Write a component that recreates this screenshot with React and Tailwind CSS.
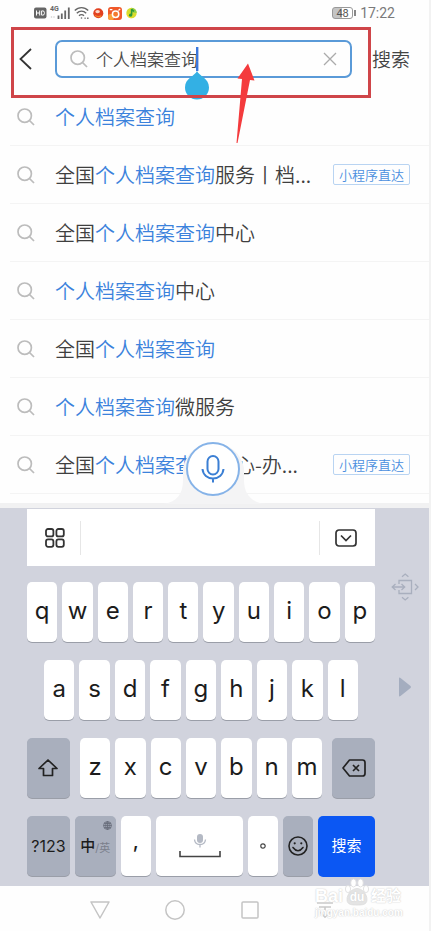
import React, { useState } from "react";

const KEYWORD = "个人档案查询";

const suggestions = [
  { before: "", after: "" },
  { before: "全国", after: "服务丨档...", tag: true },
  { before: "全国", after: "中心" },
  { before: "", after: "中心" },
  { before: "全国", after: "" },
  { before: "", after: "微服务" },
  { before: "全国", after: "中心-办...", tag: true },
];

const keyBase =
  "h-[60px] basis-0 rounded-[5px] flex items-center justify-center text-[#1c1c1c] shadow-[0_1px_0_#9a9ea8]";
const whiteKey = `${keyBase} bg-white`;
const grayKey = `${keyBase} bg-[#a9afbd]`;

const SearchIcon = ({ className }) => (
  <svg className={className} viewBox="0 0 18 18" fill="none" stroke="#bcbcbc" strokeWidth="1.7">
    <circle cx="7.7" cy="7.7" r="6.7" />
    <path d="M12.5 12.5L17 17" />
  </svg>
);

const StatusBar = () => (
  <div className="h-[26px] flex items-center justify-between pl-[34px] pr-[34px]">
    <div className="flex items-center">
      <svg width="13" height="12" viewBox="0 0 13 12">
        <rect x="0" y="0.5" width="12.5" height="11" rx="2" fill="#666" />
        <path
          d="M2.5 3.5v5M5.7 3.5v5M2.5 6h3.2M7.6 3.9v4.2h1.2a1.6 1.6 0 0 0 1.6-1.6v-1a1.6 1.6 0 0 0-1.6-1.6z"
          fill="none"
          stroke="#fff"
          strokeWidth="1"
        />
      </svg>
      <div className="relative ml-[3px] w-[21px] h-[14px]">
        <span className="absolute left-0 top-0 text-[7px] leading-[7px] font-bold text-[#666] font-['Roboto',sans-serif]">
          4G
        </span>
        <svg className="absolute inset-0" width="21" height="14" viewBox="0 0 21 14">
          <path d="M1.5 10v2M4 10v2" stroke="#ddd" strokeWidth="1.3" />
          <path d="M8.5 9.5V13M11.8 7.5V13M15.2 4.5V13M18.8 1.5V13" stroke="#666" strokeWidth="1.8" />
        </svg>
      </div>
      <svg className="ml-[3px]" width="16" height="14" viewBox="0 0 16 14" fill="none" stroke="#666" strokeWidth="1.4">
        <path d="M0.8 4.6C4.6 0.6 10.4 0.6 14.2 4.6" />
        <path d="M2.8 7.3C5.6 4.4 9.4 4.4 12.2 7.3" />
        <path d="M5 9.8C6.6 8.2 8.4 8.2 10 9.8" />
        <circle cx="7.5" cy="12" r="0.8" fill="#666" stroke="none" />
        <path d="M10.5 12.3h1.2M13 12.3h1.6" stroke="#777" strokeWidth="1.6" />
      </svg>
      <svg className="ml-[3px]" width="11" height="12" viewBox="0 0 11 12">
        <circle cx="5.3" cy="6.2" r="5" fill="#e2401f" />
        <ellipse cx="4.6" cy="4.6" rx="2.3" ry="1.6" fill="#fbd9c9" />
        <path d="M2 8.6Q5.3 10.6 8.4 8.8" stroke="#f08a2a" strokeWidth="1.2" fill="none" />
      </svg>
      <svg className="ml-[4px]" width="14" height="13" viewBox="0 0 14 13">
        <rect x="0" y="0" width="14" height="13" rx="3" fill="#f0592a" />
        <rect x="0" y="7" width="6" height="6" rx="2" fill="#f9a03a" />
        <circle cx="7.6" cy="7.2" r="3.2" fill="#f47a2e" stroke="#fff" strokeWidth="1.5" />
        <path d="M1.8 2.6h2.6M10.4 3.4l1.8-1.4" stroke="#fff" strokeWidth="1.3" />
      </svg>
      <svg className="ml-[4px]" width="11" height="12" viewBox="0 0 11 12">
        <circle cx="5.5" cy="6" r="5.2" fill="#d9dc2c" />
        <path d="M5.5 0.8A5.2 5.2 0 0 1 10.7 6L6.6 5.6z" fill="#8fd04a" />
        <path d="M5.5 11.2A5.2 5.2 0 0 1 0.5 7.6L5 6.4z" fill="#f3dc2c" />
        <path d="M5.6 2v6M5.6 2.4L8 4.4" stroke="#2f9a3a" strokeWidth="1.6" fill="none" />
        <circle cx="4.5" cy="8.2" r="1.6" fill="#2f9a3a" />
      </svg>
    </div>
    <div className="flex items-center font-['Roboto',sans-serif] font-normal text-[#7a7a7a]">
      <div className="w-[21px] h-[12px] rounded-[3px] border border-[#999] bg-linear-to-r from-[#c4c4c4] from-50% to-white to-50% flex items-center justify-center text-[11px] leading-none text-[#555]">
        48
      </div>
      <div className="w-[2px] h-[6px] bg-[#888] ml-px mr-[4px]" />
      <span className="text-[14px] leading-[16px]">17:22</span>
    </div>
  </div>
);

const Header = ({ query, setQuery }) => (
  <header className="relative z-10 h-[62px] pt-[14px] flex items-start pl-[18px] pr-[19px]">
    <button type="button" aria-label="返回" className="w-[37px] h-[38px] flex items-center">
      <svg width="15" height="22" viewBox="0 0 15 22" fill="none" stroke="#333" strokeWidth="1.8">
        <path d="M13 1L2.5 11L13 21" />
      </svg>
    </button>
    <div className="relative flex-1 h-[38px] flex items-center rounded-[7px] border-2 border-[#5a9ad8] pl-[13px] pr-[13px]">
      <SearchIcon className="w-[18px] h-[18px] shrink-0" />
      <input
        type="text"
        aria-label="搜索内容"
        value={query}
        onChange={(e) => setQuery(e.target.value)}
        className="flex-1 min-w-0 ml-[8px] text-[17px] leading-[24px] text-[#4a4a4a] outline-none bg-transparent"
      />
      <button type="button" aria-label="清除" onClick={() => setQuery("")}>
        <svg width="14" height="14" viewBox="0 0 14 14" stroke="#ababab" strokeWidth="1.3">
          <path d="M1 1L13 13M13 1L1 13" />
        </svg>
      </button>
      {/* text cursor and its drag handle */}
      <svg className="absolute left-[127px] top-[5px]" width="26" height="53" viewBox="0 0 26 53">
        <rect x="12" y="0" width="2.4" height="24" fill="#3b78dd" />
        <path d="M13 24C15 29 25 31 25 40.5A12 12 0 0 1 1 40.5C1 31 11 29 13 24z" fill="#33b0e4" />
      </svg>
    </div>
    <button type="submit" className="ml-[20px] h-[38px] text-[19px] leading-[38px] text-[#444]">
      搜索
    </button>

    {/* highlight frame and pointer */}
    <div className="pointer-events-none absolute left-[11px] right-[58px] top-[1px] h-[71px] border-[3px] border-[#cf4549]" />
    <svg className="pointer-events-none absolute left-[235px] top-[37px]" width="22" height="82" viewBox="0 0 22 82">
      <path d="M13 0.5L19.5 17.5L15 17L2.5 80L1.5 80L7 16L2.5 15.5z" fill="#f43b3d" />
    </svg>
  </header>
);

const Suggestions = () => (
  <ul className="relative h-[415px] overflow-hidden ml-[10px]">
    {suggestions.map((s, i) => (
      <li key={i} className="border-b border-[#f4f4f4]">
        <a href="#" className="h-[57px] flex items-center pl-[7px] pr-[19px]">
          <SearchIcon className="w-[18px] h-[18px] shrink-0" />
          <span className="ml-[20px] flex-1 whitespace-nowrap text-[20px] leading-[30px] text-[#3f3f3f]">
            {s.before}
            <span className="text-[#3b82dc]">{KEYWORD}</span>
            {s.after}
          </span>
          {s.tag && (
            <span className="h-[21px] px-[5px] rounded-[2px] border border-[#b9d4f2] text-[13px] leading-[19px] text-[#4a8fdf]">
              小程序直达
            </span>
          )}
        </a>
      </li>
    ))}
  </ul>
);

const VoiceButton = () => (
  <div className="absolute left-1/2 -translate-x-1/2 bottom-[4px] w-[104px] h-[68px]">
    <svg className="absolute inset-0" width="104" height="68" viewBox="0 0 104 68">
      <path
        d="M0 68C14 66 20 58 20 44L20 32A31 31 0 0 1 81 32L81 44C81 58 88 66 102 68z"
        fill="#f4f4f5"
      />
    </svg>
    <button
      type="button"
      aria-label="语音搜索"
      className="absolute left-[23px] top-[6px] w-[54px] h-[54px] rounded-full bg-white border-2 border-[#86b3e8] flex items-center justify-center"
    >
      <svg width="24" height="28" viewBox="0 0 24 28" fill="none" stroke="#3b7fd4" strokeWidth="2">
        <rect x="6.5" y="1" width="11" height="18.5" rx="5.5" />
        <path d="M1.5 14C2 20 6.5 23.5 12 23.5S22 20 22.5 14M12 23.5V27.5" />
      </svg>
    </button>
  </div>
);

const Letters = ({ letters }) =>
  letters.split("").map((l) => (
    <button key={l} type="button" className={`${whiteKey} grow pb-[2px] text-[24px] leading-none`}>
      {l}
    </button>
  ));

const Keyboard = () => (
  <section className="bg-[#d1d3dd] h-[378px] flex pl-[27px] font-['Inter','Noto_Sans_CJK_SC',sans-serif] font-normal">
    <div className="flex-1 pt-px">
      <div className="h-[57px] bg-white flex items-center justify-between">
        <button type="button" aria-label="菜单" className="w-[54px] h-[34px] flex items-center justify-center pl-[3px] border-r border-[#e6e6e6]">
          <svg width="20" height="20" viewBox="0 0 20 20" fill="none" stroke="#333" strokeWidth="1.8">
            <rect x="1" y="1" width="7.4" height="7.4" rx="2" />
            <rect x="11.4" y="1" width="7.4" height="7.4" rx="2" />
            <rect x="1" y="11.4" width="7.4" height="7.4" rx="2" />
            <rect x="11.4" y="11.4" width="7.4" height="7.4" rx="2" />
          </svg>
        </button>
        <button type="button" aria-label="收起键盘" className="w-[56px] h-[34px] flex items-center justify-center pr-[4px] border-l border-[#e6e6e6]">
          <svg width="22" height="18" viewBox="0 0 22 18" fill="none" stroke="#333" strokeWidth="1.7">
            <rect x="1" y="1" width="20" height="16" rx="3" />
            <path d="M6 6.5L11 11.5L16 6.5" />
          </svg>
        </button>
      </div>

      <div className="mt-[16px] flex flex-col gap-[18px]">
        <div className="flex gap-[5px]">
          <Letters letters="qwertyuiop" />
        </div>
        <div className="flex gap-[5px] px-[17px]">
          <Letters letters="asdfghjkl" />
        </div>
        <div className="flex gap-[10px]">
          <button type="button" aria-label="大写" className={`${grayKey} grow-[43]`}>
            <svg width="20" height="18" viewBox="0 0 20 18" fill="none" stroke="#222" strokeWidth="1.7" strokeLinejoin="round">
              <path d="M10 1L19 9.5H14.5V16.5H5.5V9.5H1z" />
            </svg>
          </button>
          <div className="grow-[243] basis-0 flex gap-[5px]">
            <Letters letters="zxcvbnm" />
          </div>
          <button type="button" aria-label="删除" className={`${grayKey} grow-[43]`}>
            <svg width="24" height="18" viewBox="0 0 24 18" fill="none" stroke="#222" strokeWidth="1.7" strokeLinejoin="round">
              <path d="M7.5 1H20.5Q23 1 23 3.5V14.5Q23 17 20.5 17H7.5L1 9z" />
              <path d="M11 6L17 12M17 6L11 12" />
            </svg>
          </button>
        </div>
        <div className="flex gap-[5px]">
          <button type="button" className={`${grayKey} grow-[43] text-[16px]`}>?123</button>
          <button type="button" className={`${grayKey} relative grow-[41] text-[15px] font-medium`}>
            中<span className="text-[11px] font-normal text-[#7b808c] pt-[4px]">/英</span>
            <svg className="absolute right-[4px] top-[5px]" width="9" height="9" viewBox="0 0 10 10" fill="none" stroke="#666b78" strokeWidth="0.9">
              <circle cx="5" cy="5" r="4.4" />
              <ellipse cx="5" cy="5" rx="2" ry="4.4" />
              <path d="M0.6 5H9.4M5 0.6V9.4M1.3 2.8H8.7M1.3 7.2H8.7" />
            </svg>
          </button>
          <button type="button" className={`${whiteKey} grow-[30] pb-[10px] text-[20px] font-medium`}>,</button>
          <button type="button" aria-label="空格" className={`${whiteKey} grow-[88]`}>
            <svg width="42" height="26" viewBox="0 0 42 26" fill="none">
              <rect x="18" y="1" width="6" height="9" rx="3" fill="#b4b9c4" />
              <path d="M15.5 6.5Q16 11.5 21 11.5T26.5 6.5M21 11.5V14.5" stroke="#b4b9c4" strokeWidth="1.3" />
              <path d="M1 18V23.5H41V18" stroke="#444" strokeWidth="1.6" />
            </svg>
          </button>
          <button type="button" aria-label="句号" className={`${whiteKey} grow-[30]`}>
            <svg width="6" height="6" viewBox="0 0 6 6" fill="none" stroke="#444" strokeWidth="1.2">
              <circle cx="3" cy="3" r="2.2" />
            </svg>
          </button>
          <button type="button" aria-label="表情" className={`${grayKey} grow-[30]`}>
            <svg width="20" height="20" viewBox="0 0 20 20" fill="none" stroke="#222" strokeWidth="1.6">
              <circle cx="10" cy="10" r="9" />
              <path d="M5 11.5Q10 18 15 11.5" strokeLinecap="round" />
              <circle cx="6.7" cy="7.3" r="1.1" fill="#222" stroke="none" />
              <circle cx="13.3" cy="7.3" r="1.1" fill="#222" stroke="none" />
            </svg>
          </button>
          <button
            type="button"
            className="h-[61px] grow-[57] basis-0 rounded-[5px] bg-[#0b57f3] text-white text-[15px]"
          >
            搜索
          </button>
        </div>
      </div>
    </div>

    <div className="w-[54px] shrink-0 flex flex-col items-center pl-[5px] pt-[65px] gap-[76px]">
      <button type="button" aria-label="移动键盘">
        <svg width="28" height="28" viewBox="0 0 28 28" fill="none" stroke="#a9afbe" strokeWidth="1.3">
          <path d="M8 11V7.5H20.5V20.5H8V17" />
          <path d="M1 14H13.5M4.5 11L1.2 14L4.5 17M10.5 11L13.7 14L10.5 17" />
          <path d="M11 3.8L14.2 1L17.4 3.8M11 24.2L14.2 27L17.4 24.2M24 11L27 14L24 17" />
        </svg>
      </button>
      <button type="button" aria-label="切换到右侧">
        <svg width="14" height="20" viewBox="0 0 14 20">
          <path d="M1 1.5Q1 0 2.500 1L12.500 9Q13.500 10 12.500 11L2.500 19Q1 20 1 18.500z" fill="#a4adbf" />
        </svg>
      </button>
    </div>
  </section>
);

const NavBar = () => (
  <nav className="relative h-[45px] pl-[62px] pr-[67px] pt-[3px] grid grid-cols-4 items-center justify-items-center">
    <button type="button" aria-label="后退">
      <svg width="20" height="18" viewBox="0 0 20 18" fill="none" stroke="#c4c4c4" strokeWidth="1.5" strokeLinejoin="round">
        <path d="M1 1H19L10 17z" />
      </svg>
    </button>
    <button type="button" aria-label="主页">
      <svg width="20" height="20" viewBox="0 0 20 20" fill="none" stroke="#c4c4c4" strokeWidth="1.5">
        <circle cx="10" cy="10" r="9.2" />
      </svg>
    </button>
    <button type="button" aria-label="最近任务">
      <svg width="18" height="18" viewBox="0 0 18 18" fill="none" stroke="#c4c4c4" strokeWidth="1.5">
        <rect x="1" y="1" width="16" height="16" rx="1" />
      </svg>
    </button>
    <button type="button" aria-label="下拉通知">
      <svg width="16" height="18" viewBox="0 0 16 18" fill="none" stroke="#c9c9c9" strokeWidth="1.6">
        <path d="M0 2H16M2 6H14M8 6V16M3 11L8 16L13 11" />
      </svg>
    </button>

    {/* watermark */}
    <div className="pointer-events-none absolute right-[24px] -top-[8px] w-[90px] font-['Liberation_Sans','Noto_Sans_CJK_SC',sans-serif] font-bold text-white [text-shadow:0_0_1px_#ccc,0_0_2px_#ddd]">
      <div className="flex items-center h-[28px]">
        <span className="text-[18px] leading-[18px] pt-[8px]">Bai</span>
        <div className="relative w-[28px] h-[28px]">
          <svg className="absolute inset-0" width="28" height="28" viewBox="-1 0 28 28" fill="#fff" stroke="#dcdcdc" strokeWidth="0.8">
            <ellipse cx="4" cy="11" rx="2.6" ry="3.6" />
            <ellipse cx="9.5" cy="5" rx="2.8" ry="4" />
            <ellipse cx="16.5" cy="5" rx="2.8" ry="4" />
            <ellipse cx="22" cy="11" rx="2.6" ry="3.6" />
            <path d="M13 10.5C18 10.5 23 16 23 21.5S18 27 13 27S3 27 3 21.5S8 10.5 13 10.5z" fill="#e4e4e4" />
          </svg>
          <span className="absolute left-0 right-0 top-[13px] text-center text-[12px] leading-[12px]">du</span>
        </div>
        <span className="text-[15px] leading-[18px] pt-[8px]">经验</span>
      </div>
      <div className="text-[10px] leading-[14px] whitespace-nowrap">jingyan.baidu.com</div>
    </div>
  </nav>
);

const App = () => {
  const [query, setQuery] = useState(KEYWORD);

  return (
    <div className="w-full bg-[#fefefe] border-r-2 border-[#f2f2f2] overflow-hidden font-['Noto_Sans_CJK_SC',sans-serif] font-[350]">
      <StatusBar />
      <Header query={query} setQuery={setQuery} />
      <div className="relative pb-[5px] bg-[#f1f1f2]">
        <div className="bg-[#fefefe]">
          <Suggestions />
        </div>
        <VoiceButton />
      </div>
      <Keyboard />
      <NavBar />
    </div>
  );
};

export default App;
